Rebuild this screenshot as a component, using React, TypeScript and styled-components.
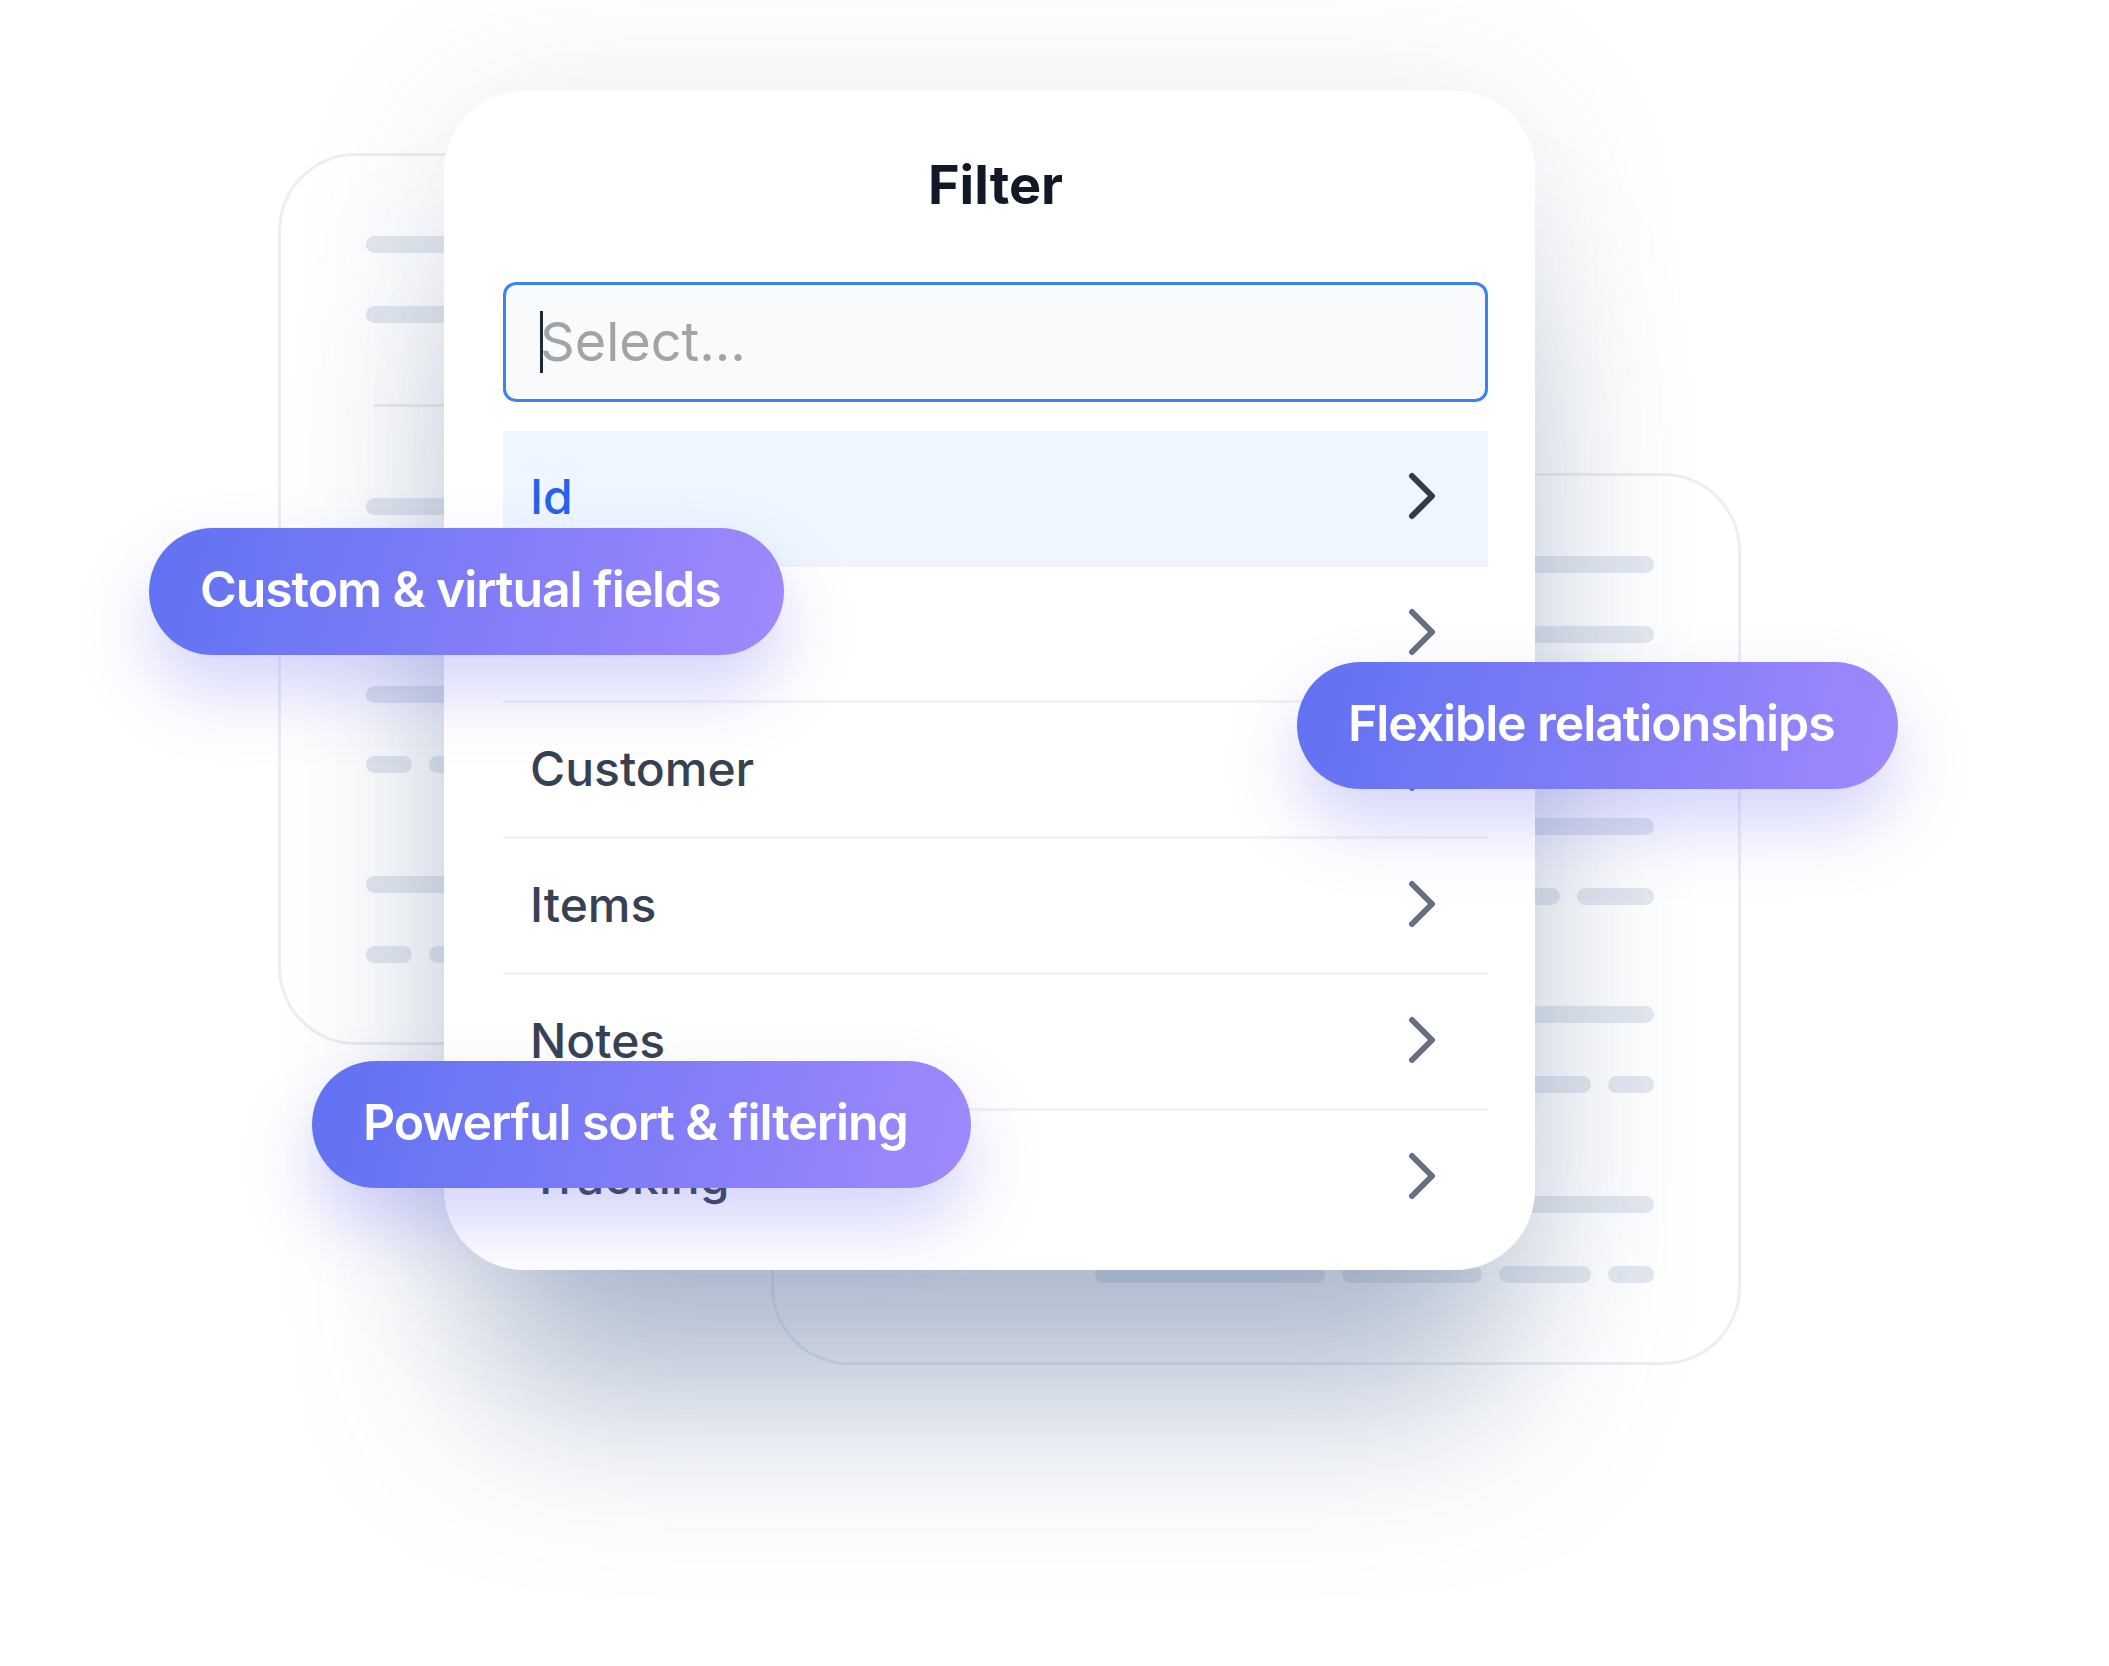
import styled, { createGlobalStyle } from 'styled-components';

const GlobalStyle = createGlobalStyle`
  html, body {
    margin: 0;
    padding: 0;
    background: #ffffff;
  }
  body {
    font-family: Inter, "Noto Sans", sans-serif;
    -webkit-font-smoothing: antialiased;
  }
`;

const Stage = styled.div`
  position: relative;
  width: 2109px;
  height: 1666px;
  overflow: hidden;
  background: #ffffff;
`;

/* ---------- skeleton cards behind the filter ---------- */

const BackCard = styled.div<{ $left: number; $top: number }>`
  position: absolute;
  left: ${p => p.$left}px;
  top: ${p => p.$top}px;
  width: 970px;
  height: 892px;
  box-sizing: border-box;
  padding: 80px 84px 0 85px;
  border: 3px solid #eceef2;
  border-radius: 78px;
  background: #ffffff;
  display: flex;
  flex-direction: column;
  z-index: 1;
`;

const BarGroup = styled.div<{ $space?: number }>`
  display: flex;
  flex-direction: column;
  gap: 53px;
  margin-top: ${p => p.$space ?? 0}px;
`;

const BarRow = styled.div<{ $mirrored?: boolean }>`
  display: flex;
  flex-direction: ${p => (p.$mirrored ? 'row' : 'row-reverse')};
  gap: 17px;
  height: 17px;
`;

const Bar = styled.div<{ $width?: number }>`
  height: 17px;
  border-radius: 9px;
  background: #e3e8ef;
  flex: ${p => (p.$width ? `0 0 ${p.$width}px` : '1 1 auto')};
`;

const SkeletonDivider = styled.div<{ $mirrored?: boolean }>`
  height: 3px;
  background: #eceef2;
  margin: 81px 0 91px;
  margin-left: ${p => (p.$mirrored ? 8 : 0)}px;
  margin-right: ${p => (p.$mirrored ? 0 : 8)}px;
`;

const shortA = [77, 150, 120, 190];
const shortB = [46, 92, 140, 230];

const SkeletonCard = ({ left, top, mirrored }: { left: number; top: number; mirrored?: boolean }) => (
  <BackCard $left={left} $top={top}>
    <BarGroup>
      <BarRow $mirrored={mirrored}><Bar /></BarRow>
      <BarRow $mirrored={mirrored}><Bar /></BarRow>
    </BarGroup>
    <SkeletonDivider $mirrored={mirrored} />
    <BarGroup>
      <BarRow $mirrored={mirrored}><Bar /></BarRow>
      <BarRow $mirrored={mirrored}>
        {shortA.map((w, i) => <Bar key={i} $width={w} />)}
      </BarRow>
    </BarGroup>
    <BarGroup $space={101}>
      <BarRow $mirrored={mirrored}><Bar /></BarRow>
      <BarRow $mirrored={mirrored}>
        {shortB.map((w, i) => <Bar key={i} $width={w} />)}
      </BarRow>
    </BarGroup>
    <BarGroup $space={103}>
      <BarRow $mirrored={mirrored}><Bar /></BarRow>
      <BarRow $mirrored={mirrored}>
        {shortB.map((w, i) => <Bar key={i} $width={w} />)}
      </BarRow>
    </BarGroup>
  </BackCard>
);

/* ---------- filter card ---------- */

const FilterCard = styled.section`
  position: absolute;
  left: 444px;
  top: 91px;
  width: 1091px;
  height: 1179px;
  box-sizing: border-box;
  padding: 63px 47px 0 59px;
  background: #ffffff;
  border-radius: 80px;
  display: flex;
  flex-direction: column;
  z-index: 2;
  box-shadow:
    0 10px 150px rgba(100, 116, 150, 0.16),
    0 170px 180px -40px rgba(71, 98, 145, 0.4);
`;

const Title = styled.h2`
  margin: 0;
  font-size: 54px;
  line-height: 62px;
  font-weight: 700;
  color: #111827;
  text-align: center;
`;

const SearchField = styled.div`
  margin-top: 66px;
  height: 120px;
  box-sizing: border-box;
  border: 3px solid #3b82f6;
  border-radius: 13px;
  background: #f9fafb;
  display: flex;
  align-items: center;
  padding-left: 34px;
`;

const Caret = styled.span`
  width: 3px;
  height: 62px;
  background: #1f2937;
  flex: none;
`;

const Placeholder = styled.span`
  margin-left: -3px;
  font-size: 54px;
  font-weight: 400;
  color: #a3a3a3;
  line-height: 1;
`;

const FieldList = styled.div`
  margin-top: 29px;
  display: flex;
  flex-direction: column;
`;

const FieldRow = styled.div<{ $active?: boolean }>`
  height: 136px;
  box-sizing: border-box;
  border-bottom: 3px solid #f1f3f6;
  background: ${p => (p.$active ? '#eff6ff' : 'transparent')};
  display: flex;
  align-items: center;
  justify-content: space-between;
  padding: 0 51px 3px 27px;

  &:last-child {
    border-bottom-color: transparent;
  }
`;

const FieldLabel = styled.span<{ $active?: boolean }>`
  font-size: 48px;
  font-weight: 500;
  color: ${p => (p.$active ? '#2563eb' : '#374151')};
`;

const Chevron = ({ dark }: { dark?: boolean }) => (
  <svg width="30" height="48" viewBox="0 0 30 48" fill="none">
    <path
      d="M5 4 L25 24 L5 44"
      stroke={dark ? '#333b4a' : '#687080'}
      strokeWidth="6"
      strokeLinecap="round"
      strokeLinejoin="round"
    />
  </svg>
);

/* ---------- callout pills ---------- */

const Callout = styled.div<{ $left: number; $top: number }>`
  position: absolute;
  left: ${p => p.$left}px;
  top: ${p => p.$top}px;
  height: 127px;
  box-sizing: border-box;
  padding: 0 63px 5px 51px;
  display: inline-flex;
  align-items: center;
  border-radius: 64px;
  background: linear-gradient(105deg, #6072f2 0%, #7c7bf6 45%, #a089fe 100%);
  color: #ffffff;
  font-size: 50px;
  font-weight: 600;
  letter-spacing: -1.1px;
  white-space: nowrap;
  z-index: 3;
  box-shadow: 0 36px 70px rgba(99, 102, 241, 0.28);
`;

const fields = ['Id', '', 'Customer', 'Items', 'Notes', 'Tracking'];

const App = () => (
  <>
    <GlobalStyle />
    <Stage>
      <SkeletonCard left={278} top={153} mirrored />
      <SkeletonCard left={771} top={473} />

      <FilterCard>
        <Title>Filter</Title>
        <SearchField>
          <Caret />
          <Placeholder>Select...</Placeholder>
        </SearchField>
        <FieldList>
          {fields.map((name, i) => (
            <FieldRow key={i} $active={i === 0}>
              <FieldLabel $active={i === 0}>{name}</FieldLabel>
              <Chevron dark={i === 0} />
            </FieldRow>
          ))}
        </FieldList>
      </FilterCard>

      <Callout $left={149} $top={528}>Custom &amp; virtual fields</Callout>
      <Callout $left={1297} $top={662}>Flexible relationships</Callout>
      <Callout $left={312} $top={1061}>Powerful sort &amp; filtering</Callout>
    </Stage>
  </>
);

export default App;
